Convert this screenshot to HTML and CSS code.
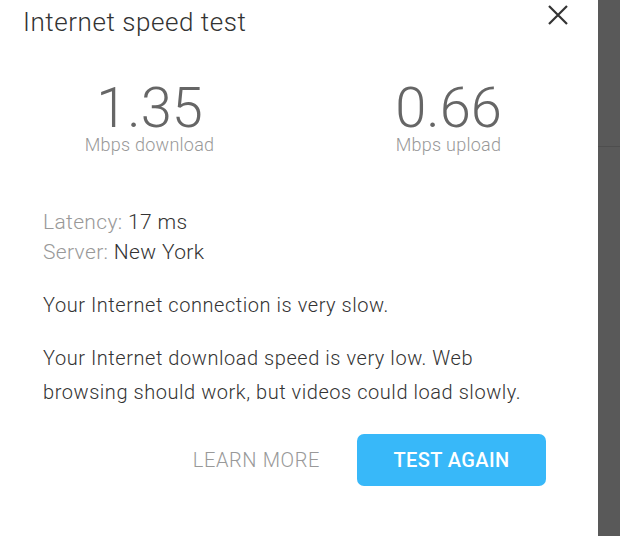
FILE: index.html
```html
<!DOCTYPE html>
<html lang="en">
<head>
<meta charset="utf-8">
<title>Internet speed test</title>
<link rel="stylesheet" href="styles.css">
</head>
<body>
<div class="page">
  <div class="dialog">
    <div class="header">
      <h1 class="title">Internet speed test</h1>
      <button class="close" aria-label="Close">
        <svg width="22" height="22" viewBox="0 0 22 22"><path d="M2 2 L20 20 M20 2 L2 20" stroke="#333" stroke-width="2.2" fill="none"/></svg>
      </button>
    </div>
    <div class="stats">
      <div class="stat">
        <div class="value">1.35</div>
        <div class="unit">Mbps download</div>
      </div>
      <div class="stat">
        <div class="value">0.66</div>
        <div class="unit">Mbps upload</div>
      </div>
    </div>
    <div class="info">
      <div class="row"><span class="key">Latency:</span> 17 ms</div>
      <div class="row"><span class="key">Server:</span> New York</div>
    </div>
    <p class="msg first">Your Internet connection is very slow.</p>
    <p class="msg second">Your Internet download speed is very low. Web browsing should work, but videos could load slowly.</p>
    <div class="actions">
      <button class="learn">LEARN MORE</button>
      <button class="again">TEST AGAIN</button>
    </div>
  </div>
  <div class="side">
    <div class="side-top"></div>
  </div>
</div>
</body>
</html>
```
FILE: styles.css
```css
html, body {
  margin: 0;
  padding: 0;
  background: #fff;
}
body {
  font-family: Roboto, "Liberation Sans", sans-serif;
  color: #333;
}
.page {
  display: flex;
  width: 620px;
  height: 536px;
  overflow: hidden;
}
.dialog {
  width: 598px;
  flex: none;
  background: #fff;
  display: flex;
  flex-direction: column;
}
.side {
  flex: 1;
  background: #595959;
}
.side-top {
  height: 146px;
  border-bottom: 1px solid #4e4e4e;
}
.header {
  display: flex;
  justify-content: space-between;
  align-items: flex-start;
  padding: 6px 29px 0 23px;
}
.title {
  margin: 0;
  font-size: 26px;
  line-height: 32px;
  font-weight: 300;
  letter-spacing: 0.55px;
  color: #333;
}
.close {
  border: 0;
  background: none;
  padding: 0;
  margin-top: -2px;
  width: 22px;
  height: 22px;
  display: block;
}
.close svg { display: block; }
.stats {
  display: grid;
  grid-template-columns: 1fr 1fr;
  margin-top: 44px;
  text-align: center;
}
.value {
  font-size: 56px;
  line-height: 52px;
  font-weight: 300;
  color: #666;
}
.unit {
  font-size: 18px;
  line-height: 22px;
  font-weight: 300;
  letter-spacing: 0.25px;
  color: #999;
}
.info {
  margin-top: 51px;
  padding-left: 43px;
  font-size: 21px;
  line-height: 30px;
  font-weight: 300;
  letter-spacing: 0.35px;
  color: #333;
}
.key {
  color: #999;
}
.msg {
  margin: 0;
  padding: 0 43px;
  font-size: 20px;
  line-height: 34px;
  font-weight: 300;
  letter-spacing: 0.55px;
  color: #333;
}
.msg.first { margin-top: 21px; }
.msg.second { margin-top: 19px; }
.actions {
  display: flex;
  justify-content: flex-end;
  align-items: center;
  gap: 37px;
  margin-top: 25px;
  padding-right: 52px;
}
.learn {
  border: 0;
  background: none;
  padding: 0;
  font-family: inherit;
  font-size: 20px;
  font-weight: 300;
  letter-spacing: 0.6px;
  color: #999;
}
.again {
  border: 0;
  width: 189px;
  height: 52px;
  border-radius: 7px;
  background: #38b8f9;
  color: #fff;
  font-family: inherit;
  font-size: 20px;
  font-weight: 500;
  letter-spacing: 0.4px;
}
```
